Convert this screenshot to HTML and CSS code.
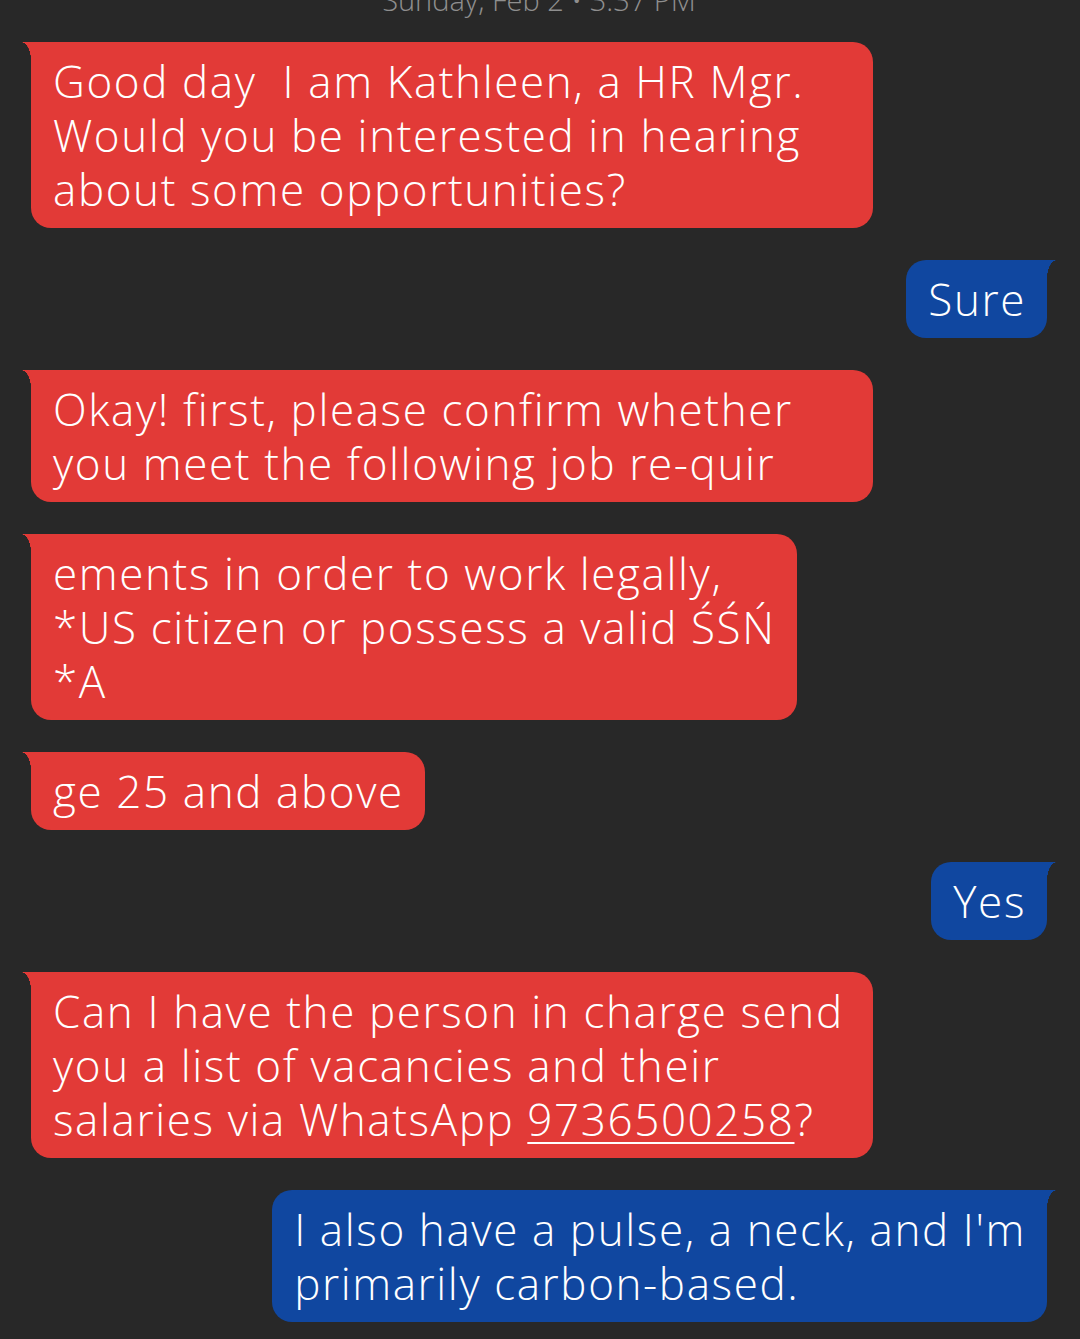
FILE: index.html
```html
<!DOCTYPE html>
<html lang="en">
<head>
<meta charset="utf-8">
<title>Messages</title>
<link rel="stylesheet" href="styles.css">
</head>
<body>
<main class="thread">
  <div class="date">Sunday, Feb 2 • 3:37 PM</div>
  <div class="bubble in wrapped">Good day  I am Kathleen, a HR Mgr.
Would you be interested in hearing
about some opportunities?</div>
  <div class="bubble out">Sure</div>
  <div class="bubble in wrapped">Okay! first, please confirm whether
you meet the following job re-quir</div>
  <div class="bubble in">ements in order to work legally,
*US citizen or possess a valid ŚŚŃ
*A</div>
  <div class="bubble in">ge 25 and above</div>
  <div class="bubble out">Yes</div>
  <div class="bubble in wrapped">Can I have the person in charge send
you a list of vacancies and their
salaries via WhatsApp <span class="link">9736500258</span>?</div>
  <div class="bubble out">I also have a pulse, a neck, and I'm
primarily carbon-based.</div>
</main>
</body>
</html>
```

FILE: styles.css
```css
html, body {
  margin: 0;
  padding: 0;
  background: #282828;
}

body {
  width: 1080px;
  height: 1339px;
  overflow: hidden;
  font-family: "Open Sans", Lato, sans-serif;
}

.thread {
  display: flex;
  flex-direction: column;
  gap: 32px;
  padding: 0 33px 0 31px;
}

.date {
  align-self: center;
  margin-top: -20px;
  height: 30px;
  line-height: 40px;
  font-size: 29px;
  font-weight: 300;
  color: #8f8f8f;
}

.bubble {
  position: relative;
  box-sizing: border-box;
  max-width: 842px;
  padding: 12px 21px 12px 22px;
  border-radius: 20px;
  font-size: 44px;
  font-weight: 350;
  letter-spacing: 1.6px;
  line-height: 54px;
  color: #ffffff;
  white-space: pre;
}

.bubble::before {
  content: "";
  position: absolute;
  top: 0;
  width: 10px;
  height: 18px;
}

.in {
  align-self: flex-start;
  background: #e23a37;
  border-top-left-radius: 0;
}

.in::before {
  left: -10px;
  background: radial-gradient(10px 18px at 0 100%, transparent 98%, #e23a37 100%);
}

.out {
  align-self: flex-end;
  background: #1047a0;
  border-top-right-radius: 0;
}

.out::before {
  right: -10px;
  background: radial-gradient(10px 18px at 100% 100%, transparent 98%, #1047a0 100%);
}

.wrapped {
  width: 842px;
}

.link {
  text-decoration: underline;
  text-decoration-thickness: 2px;
  text-underline-offset: 6px;
}
```
